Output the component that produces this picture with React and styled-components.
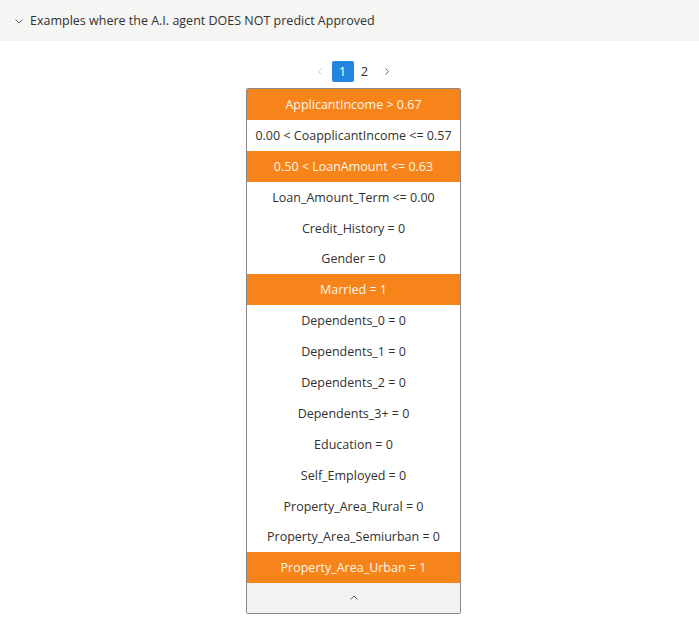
import React from "react";
import styled, { createGlobalStyle } from "styled-components";

const Global = createGlobalStyle`
  html, body { margin: 0; padding: 0; background: #ffffff; }
  body { font-family: "Open Sans", "Noto Sans", sans-serif; color: #323130; }
`;

const Page = styled.div`
  width: 699px;
  height: 623px;
  background: #fff;
`;

const Header = styled.div`
  height: 41px;
  background: #f5f5f3;
  display: flex;
  align-items: center;
  padding-left: 14px;
  gap: 6px;
  font-size: 12.5px;
  color: #323130;
`;

const Content = styled.div`
  display: flex;
  flex-direction: column;
  align-items: center;
  padding-top: 19px;
  padding-left: 8px;
`;

const Pager = styled.div`
  display: flex;
  align-items: center;
  height: 22px;
  gap: 0;
  margin-bottom: 6px;
`;

const PageArrow = styled.span`
  width: 22px;
  display: flex;
  justify-content: center;
  align-items: center;
  color: ${p => (p.$disabled ? "#c8c6c4" : "#605e5c")};
`;

const PageNum = styled.span`
  width: 22px;
  height: 21px;
  display: flex;
  justify-content: center;
  align-items: center;
  font-size: 13px;
  border-radius: 2px;
  background: ${p => (p.$active ? "#2286e0" : "transparent")};
  color: ${p => (p.$active ? "#fff" : "#323130")};
`;

const Card = styled.div`
  width: 213px;
  border: 1px solid #8a8886;
  border-radius: 2px;
  overflow: hidden;
  display: flex;
  flex-direction: column;
`;

const Row = styled.div`
  height: 30.9px;
  display: flex;
  align-items: center;
  justify-content: center;
  font-size: 12.5px;
  white-space: nowrap;
  background: ${p => (p.$hl ? "#f7841a" : "#ffffff")};
  color: ${p => (p.$hl ? "#fdf4e8" : "#323130")};
`;

const Footer = styled.div`
  height: 30px;
  background: #f3f2f1;
  display: flex;
  align-items: center;
  justify-content: center;
  color: #605e5c;
`;

const rows = [
  ["ApplicantIncome > 0.67", true],
  ["0.00 < CoapplicantIncome <= 0.57", false],
  ["0.50 < LoanAmount <= 0.63", true],
  ["Loan_Amount_Term <= 0.00", false],
  ["Credit_History = 0", false],
  ["Gender = 0", false],
  ["Married = 1", true],
  ["Dependents_0 = 0", false],
  ["Dependents_1 = 0", false],
  ["Dependents_2 = 0", false],
  ["Dependents_3+ = 0", false],
  ["Education = 0", false],
  ["Self_Employed = 0", false],
  ["Property_Area_Rural = 0", false],
  ["Property_Area_Semiurban = 0", false],
  ["Property_Area_Urban = 1", true],
];

const Chev = ({ d, size = 10, color = "currentColor" }) => (
  <svg width={size} height={size} viewBox="0 0 10 10" fill="none" stroke={color} strokeWidth="1">
    <path d={d} />
  </svg>
);

export default function App() {
  return (
    <Page>
      <Global />
      <Header>
        <Chev d="M1.5 3.5 L5 7 L8.5 3.5" color="#605e5c" />
        <span>Examples where the A.I. agent DOES NOT predict Approved</span>
      </Header>
      <Content>
        <Pager>
          <PageArrow $disabled>
            <Chev d="M6 1.5 L3 5 L6 8.5" size={9} />
          </PageArrow>
          <PageNum $active>1</PageNum>
          <PageNum>2</PageNum>
          <PageArrow>
            <Chev d="M4 1.5 L7 5 L4 8.5" size={9} />
          </PageArrow>
        </Pager>
        <Card>
          {rows.map(([t, hl]) => (
            <Row key={t} $hl={hl}>{t}</Row>
          ))}
          <Footer>
            <Chev d="M1.5 6.5 L5 3 L8.5 6.5" size={10} />
          </Footer>
        </Card>
      </Content>
    </Page>
  );
}
